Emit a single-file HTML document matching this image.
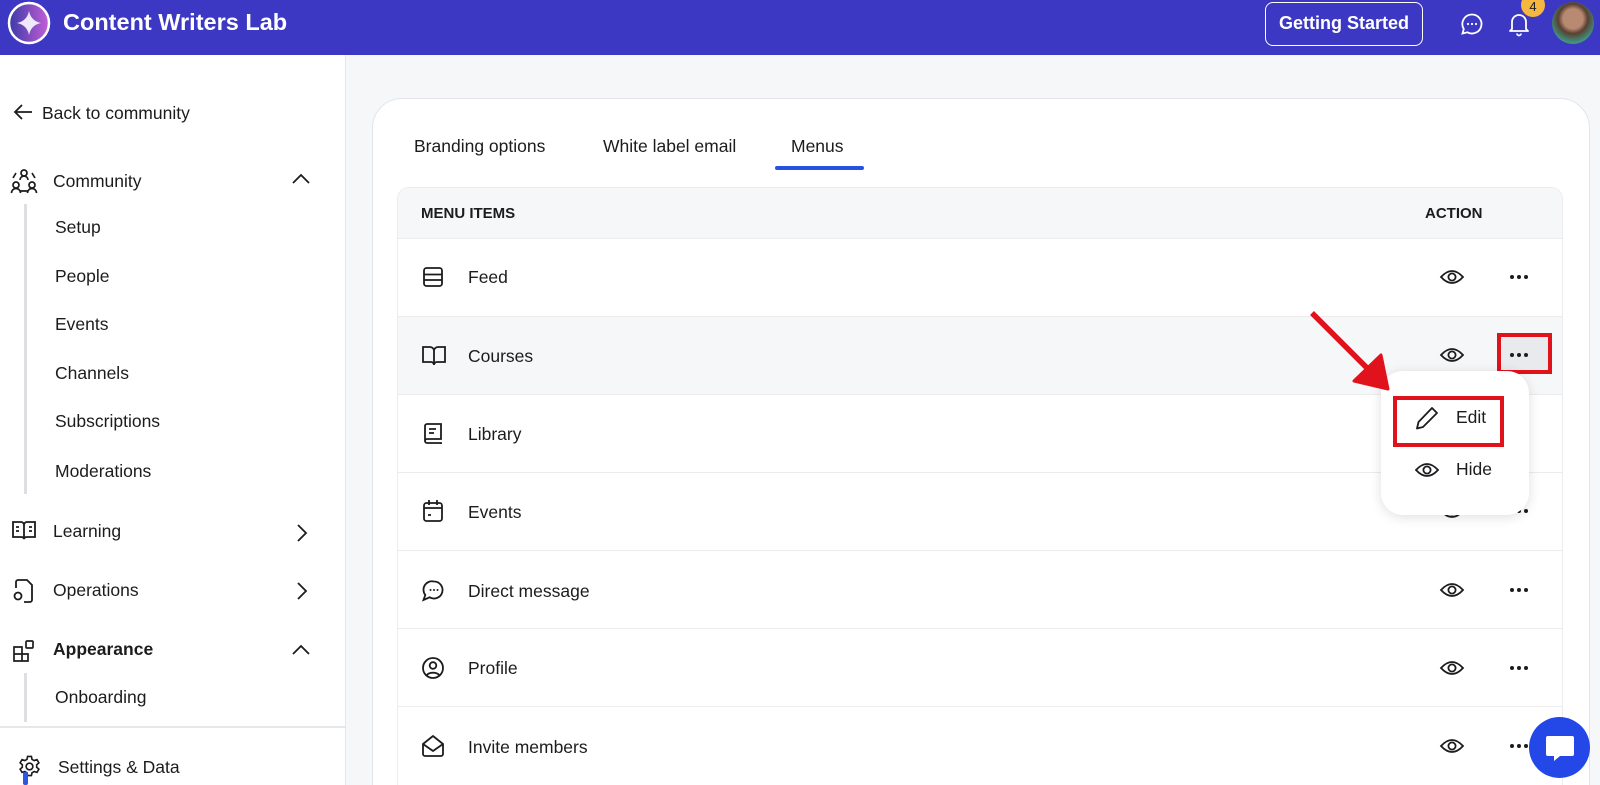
<!DOCTYPE html>
<html><head><meta charset="utf-8"><style>
*{box-sizing:border-box;margin:0;padding:0}
html,body{width:1600px;height:785px;overflow:hidden}
body{background:#f6f7f9;font-family:"Liberation Sans",Arial,sans-serif;color:#1c1c1f;position:relative}
#wrap{position:relative;width:1600px;height:785px;overflow:hidden}
.abs{position:absolute}
.top{left:0;top:0;width:1600px;height:55px;background:#3d38c3}
.side{left:0;top:55px;width:346px;height:730px;background:#fff;border-right:1px solid #e6e7ea}
.t{position:absolute;font-size:17.5px;line-height:20px;white-space:nowrap}
.card{left:372px;top:98px;width:1218px;height:720px;background:#fff;border:1px solid #e4e5e8;border-radius:30px}
.tbl{left:397px;top:187px;width:1166px;height:620px;border:1px solid #ececef;border-radius:12px;background:#fff;overflow:hidden}
.row{position:absolute;left:0;width:100%;height:78px;border-top:1px solid #ececef}
svg{position:absolute;overflow:visible}
</style></head><body><div id="wrap">
<div class="abs top"></div>
<svg style="left:7px;top:1px" width="44" height="44" viewBox="0 0 44 44"><defs><linearGradient id="g" x1="0" y1="0" x2="1" y2="0"><stop offset="0" stop-color="#3b3aa8"/><stop offset="1" stop-color="#c45fd6"/></linearGradient></defs><circle cx="22" cy="22" r="20" fill="url(#g)" stroke="#fff" stroke-width="2.5"/><path d="M22 10 Q24 20 34 22 Q24 24 22 34 Q20 24 10 22 Q20 20 22 10Z" fill="#eeeafc"/></svg>
<div class="t" style="left:63px;top:9px;font-size:23.5px;line-height:27px;font-weight:bold;color:#fff">Content Writers Lab</div>
<div class="abs" style="left:1265px;top:2px;width:158px;height:44px;border:1.5px solid #fff;border-radius:8px;color:#fff;font-size:18px;font-weight:bold;text-align:center;line-height:41px">Getting Started</div>
<svg style="left:1461px;top:13px" width="22" height="22" viewBox="0 0 22 22"><path d="M11 1.5a9.5 9.5 0 1 1-4.6 17.8L1.5 20.5l1.3-4.5A9.5 9.5 0 0 1 11 1.5z" fill="none" stroke="#fff" stroke-width="1.8"/><circle cx="7" cy="11" r="1.1" fill="#fff"/><circle cx="11" cy="11" r="1.1" fill="#fff"/><circle cx="15" cy="11" r="1.1" fill="#fff"/></svg>
<svg style="left:1508px;top:12px" width="22" height="24" viewBox="0 0 22 24"><path d="M4 17V10a7 7 0 0 1 14 0v7l2 2H2z" fill="none" stroke="#fff" stroke-width="1.8" stroke-linejoin="round"/><path d="M9 21.5a2 2 0 0 0 4 0" fill="none" stroke="#fff" stroke-width="1.8"/></svg>
<div class="abs" style="left:1521px;top:-7px;width:24px;height:24px;border-radius:50%;background:#f5b73f;color:#222;font-size:13px;text-align:center;line-height:28px">4</div>
<div class="abs" style="left:1552px;top:2px;width:42px;height:42px;border-radius:50%;background:radial-gradient(circle at 50% 40%,#b98a72 0 30%,#5a4032 45%,#3f8e7a 70%,#9aa6a0 100%)"></div>

<div class="abs side"></div>
<svg style="left:13px;top:103px" width="20" height="18" viewBox="0 0 20 18"><path d="M19 9H2M9 2L2 9l7 7" fill="none" stroke="#1c1c1f" stroke-width="1.8"/></svg>
<div class="t" style="left:42px;top:103px">Back to community</div>
<svg style="left:10px;top:167px" width="28" height="28" viewBox="0 0 28 28" fill="none" stroke="#1c1c1f" stroke-width="1.7"><circle cx="14" cy="6" r="3"/><path d="M10 13a4 4 0 0 1 8 0"/><circle cx="6" cy="18" r="3"/><path d="M1.5 26a4.5 4.5 0 0 1 9 0"/><circle cx="22" cy="18" r="3"/><path d="M17.5 26a4.5 4.5 0 0 1 9 0"/><path d="M10 24h8M6 6 3 11M22 6l3 5"/></svg>
<div class="t" style="left:53px;top:171px">Community</div>
<svg style="left:292px;top:174px" width="18" height="10" viewBox="0 0 18 10"><path d="M1 9l8-8 8 8" fill="none" stroke="#1c1c1f" stroke-width="1.8"/></svg>
<div class="abs" style="left:24px;top:204px;width:3px;height:290px;background:#dedfe2"></div>
<div class="t" style="left:55px;top:217px">Setup</div>
<div class="t" style="left:55px;top:266px">People</div>
<div class="t" style="left:55px;top:314px">Events</div>
<div class="t" style="left:55px;top:363px">Channels</div>
<div class="t" style="left:55px;top:411px">Subscriptions</div>
<div class="t" style="left:55px;top:461px">Moderations</div>
<svg style="left:12px;top:520px" width="24" height="22" viewBox="0 0 24 22" fill="none" stroke="#1c1c1f" stroke-width="1.8"><path d="M1 2h8a3 3 0 0 1 3 3v14a3 3 0 0 0-3-2H1zM23 2h-8a3 3 0 0 0-3 3v14a3 3 0 0 1 3-2h8z"/><path d="M4 7h3M4 11h3M17 7h3M17 11h3"/></svg>
<div class="t" style="left:53px;top:521px">Learning</div>
<svg style="left:297px;top:524px" width="10" height="18" viewBox="0 0 10 18"><path d="M1 1l8 8-8 8" fill="none" stroke="#1c1c1f" stroke-width="1.8"/></svg>
<svg style="left:12px;top:578px" width="22" height="26" viewBox="0 0 22 26" fill="none" stroke="#1c1c1f" stroke-width="1.8"><path d="M4 10V4a2 2 0 0 1 2-2h9l5 5v15a2 2 0 0 1-2 2H12"/><circle cx="6" cy="18" r="3.5"/></svg>
<div class="t" style="left:53px;top:580px">Operations</div>
<svg style="left:297px;top:582px" width="10" height="18" viewBox="0 0 10 18"><path d="M1 1l8 8-8 8" fill="none" stroke="#1c1c1f" stroke-width="1.8"/></svg>
<svg style="left:13px;top:640px" width="22" height="22" viewBox="0 0 22 22" fill="none" stroke="#1c1c1f" stroke-width="1.7"><path d="M1 7h8v14H1zM1 14h14v7H9"/><rect x="13" y="1" width="7" height="7" rx="1"/></svg>
<div class="t" style="left:53px;top:639px;font-weight:bold">Appearance</div>
<svg style="left:292px;top:645px" width="18" height="10" viewBox="0 0 18 10"><path d="M1 9l8-8 8 8" fill="none" stroke="#1c1c1f" stroke-width="1.8"/></svg>
<div class="abs" style="left:24px;top:673px;width:3px;height:49px;background:#dedfe2"></div>
<div class="t" style="left:55px;top:687px">Onboarding</div>
<div class="abs" style="left:0;top:726px;width:346px;height:1.5px;background:#e6e7ea"></div>
<svg style="left:18px;top:755px" width="23" height="23" viewBox="0 0 24 24" fill="none" stroke="#1c1c1f" stroke-width="1.7"><circle cx="12" cy="12" r="3.5"/><path d="M10 1.5h4l.6 3 2.3 1.3 2.9-1 2 3.4-2.3 2v2.6l2.3 2-2 3.4-2.9-1-2.3 1.3-.6 3h-4l-.6-3-2.3-1.3-2.9 1-2-3.4 2.3-2v-2.6l-2.3-2 2-3.4 2.9 1 2.3-1.3z"/></svg>
<div class="t" style="left:58px;top:757px">Settings &amp; Data</div>
<div class="abs" style="left:23px;top:772px;width:5px;height:13px;background:#2d55e6;border-radius:2px"></div>

<div class="abs card"></div>
<div class="t" style="left:414px;top:136px">Branding options</div>
<div class="t" style="left:603px;top:136px">White label email</div>
<div class="t" style="left:791px;top:136px">Menus</div>
<div class="abs" style="left:775px;top:166px;width:89px;height:4px;border-radius:2px;background:#2751e2"></div>

<div class="abs tbl">
 <div style="position:absolute;left:0;top:0;width:100%;height:50px;background:#f6f7f9"></div>
 <div class="row" style="top:50px"></div>
 <div class="row" style="top:128px;background:#f6f7f9"></div>
 <div class="row" style="top:206px"></div>
 <div class="row" style="top:284px"></div>
 <div class="row" style="top:362px"></div>
 <div class="row" style="top:440px"></div>
 <div class="row" style="top:518px"></div>
</div>
<div class="t" style="left:421px;top:204px;font-size:15px;font-weight:bold">MENU ITEMS</div>
<div class="t" style="left:1425px;top:204px;font-size:15px;font-weight:bold">ACTION</div>

<svg style="left:423px;top:267px" width="20" height="20" viewBox="0 0 20 20" fill="none" stroke="#1c1c1f" stroke-width="1.8"><rect x="1" y="1" width="18" height="18" rx="2.5"/><path d="M1 7.5h18M1 13h18"/></svg>
<div class="t" style="left:468px;top:267px">Feed</div>
<svg style="left:422px;top:346px" width="24" height="20" viewBox="0 0 24 20" fill="none" stroke="#1c1c1f" stroke-width="1.8"><path d="M1 1h7a4 4 0 0 1 4 4v14a3 3 0 0 0-3-3H1zM23 1h-7a4 4 0 0 0-4 4v14a3 3 0 0 1 3-3h8z"/></svg>
<div class="t" style="left:468px;top:346px">Courses</div>
<svg style="left:424px;top:423px" width="18" height="22" viewBox="0 0 18 22" fill="none" stroke="#1c1c1f" stroke-width="1.8"><path d="M1 18V3a2 2 0 0 1 2-2h14v15H3a2 2 0 0 0 0 4h14v1"/><path d="M5 6h7M5 10h5"/></svg>
<div class="t" style="left:468px;top:424px">Library</div>
<svg style="left:423px;top:500px" width="20" height="22" viewBox="0 0 20 22" fill="none" stroke="#1c1c1f" stroke-width="1.8"><rect x="1" y="3" width="18" height="18" rx="2.5"/><path d="M1 8h18M6 0v5M14 0v5M5 15h3"/></svg>
<div class="t" style="left:468px;top:502px">Events</div>
<svg style="left:422px;top:580px" width="22" height="22" viewBox="0 0 22 22"><path d="M12 1.5a8.5 8.5 0 1 1-4.3 15.8L1.5 20l1.8-5A8.5 8.5 0 0 1 12 1.5z" fill="none" stroke="#1c1c1f" stroke-width="1.8"/><circle cx="8.5" cy="10" r="1" fill="#1c1c1f"/><circle cx="12" cy="10" r="1" fill="#1c1c1f"/><circle cx="15.5" cy="10" r="1" fill="#1c1c1f"/></svg>
<div class="t" style="left:468px;top:581px">Direct message</div>
<svg style="left:422px;top:657px" width="22" height="22" viewBox="0 0 22 22" fill="none" stroke="#1c1c1f" stroke-width="1.8"><circle cx="11" cy="11" r="10"/><circle cx="11" cy="8.5" r="3.3"/><path d="M4.5 18.5a7 4.5 0 0 1 13 0"/></svg>
<div class="t" style="left:468px;top:658px">Profile</div>
<svg style="left:422px;top:735px" width="22" height="22" viewBox="0 0 22 22" fill="none" stroke="#1c1c1f" stroke-width="1.8" stroke-linejoin="round"><path d="M1 9L11 1l10 8v10a2 2 0 0 1-2 2H3a2 2 0 0 1-2-2z"/><path d="M1 9l10 7 10-7"/></svg>
<div class="t" style="left:468px;top:737px">Invite members</div>

<svg width="0" height="0"><defs><g id="eye"><path d="M1 8Q12-4 23 8Q12 20 1 8Z" fill="none" stroke="#1c1c1f" stroke-width="1.8"/><circle cx="12" cy="8" r="3.6" fill="none" stroke="#1c1c1f" stroke-width="1.8"/></g><g id="dots"><circle cx="2" cy="2" r="2" fill="#1c1c1f"/><circle cx="9" cy="2" r="2" fill="#1c1c1f"/><circle cx="16" cy="2" r="2" fill="#1c1c1f"/></g></defs></svg>
<svg style="left:1440px;top:269px" width="24" height="16"><use href="#eye"/></svg>
<svg style="left:1510px;top:275px" width="20" height="4"><use href="#dots"/></svg>
<svg style="left:1440px;top:347px" width="24" height="16"><use href="#eye"/></svg>
<div class="abs" style="left:1500px;top:336px;width:50px;height:36px;background:#e9eaee"></div>
<svg style="left:1510px;top:353px" width="20" height="4"><use href="#dots"/></svg>
<div class="abs" style="left:1497px;top:333px;width:55px;height:41px;border:4px solid #e0121b"></div>
<svg style="left:1440px;top:503px" width="24" height="16"><use href="#eye"/></svg>
<svg style="left:1510px;top:509px" width="20" height="4"><use href="#dots"/></svg>
<svg style="left:1440px;top:582px" width="24" height="16"><use href="#eye"/></svg>
<svg style="left:1510px;top:588px" width="20" height="4"><use href="#dots"/></svg>
<svg style="left:1440px;top:660px" width="24" height="16"><use href="#eye"/></svg>
<svg style="left:1510px;top:666px" width="20" height="4"><use href="#dots"/></svg>
<svg style="left:1440px;top:738px" width="24" height="16"><use href="#eye"/></svg>
<svg style="left:1510px;top:744px" width="20" height="4"><use href="#dots"/></svg>

<div class="abs" style="left:1381px;top:371px;width:148px;height:144px;background:#fff;border-radius:22px;box-shadow:0 2px 12px rgba(0,0,0,.13)"></div>
<div class="abs" style="left:1393px;top:396px;width:111px;height:51px;border:4px solid #e0121b"></div>
<svg style="left:1415px;top:406px" width="24" height="24" viewBox="0 0 24 24" fill="none" stroke="#1c1c1f" stroke-width="1.8" stroke-linejoin="round"><path d="M17 2l5 5L8 21l-6 1.5L3.5 16z"/></svg>
<div class="t" style="left:1456px;top:407px">Edit</div>
<svg style="left:1415px;top:462px" width="24" height="16"><use href="#eye"/></svg>
<div class="t" style="left:1456px;top:459px">Hide</div>

<svg style="left:0;top:0" width="1600" height="785"><path d="M1312 313L1372 373" stroke="#e0121b" stroke-width="5.5"/><path d="M1388 389L1354 381L1381 355Z" fill="#e0121b" stroke="#e0121b" stroke-width="3" stroke-linejoin="round"/></svg>

<div class="abs" style="left:1529px;top:717px;width:61px;height:61px;border-radius:50%;background:#2447e8"></div>
<svg style="left:1545px;top:735px" width="30" height="30" viewBox="0 0 30 30"><path d="M3 1h24a2 2 0 0 1 2 2v16a2 2 0 0 1-2 2H15l-6 5v-5H3a2 2 0 0 1-2-2V3a2 2 0 0 1 2-2z" fill="#fff"/></svg>
</div></body></html>
